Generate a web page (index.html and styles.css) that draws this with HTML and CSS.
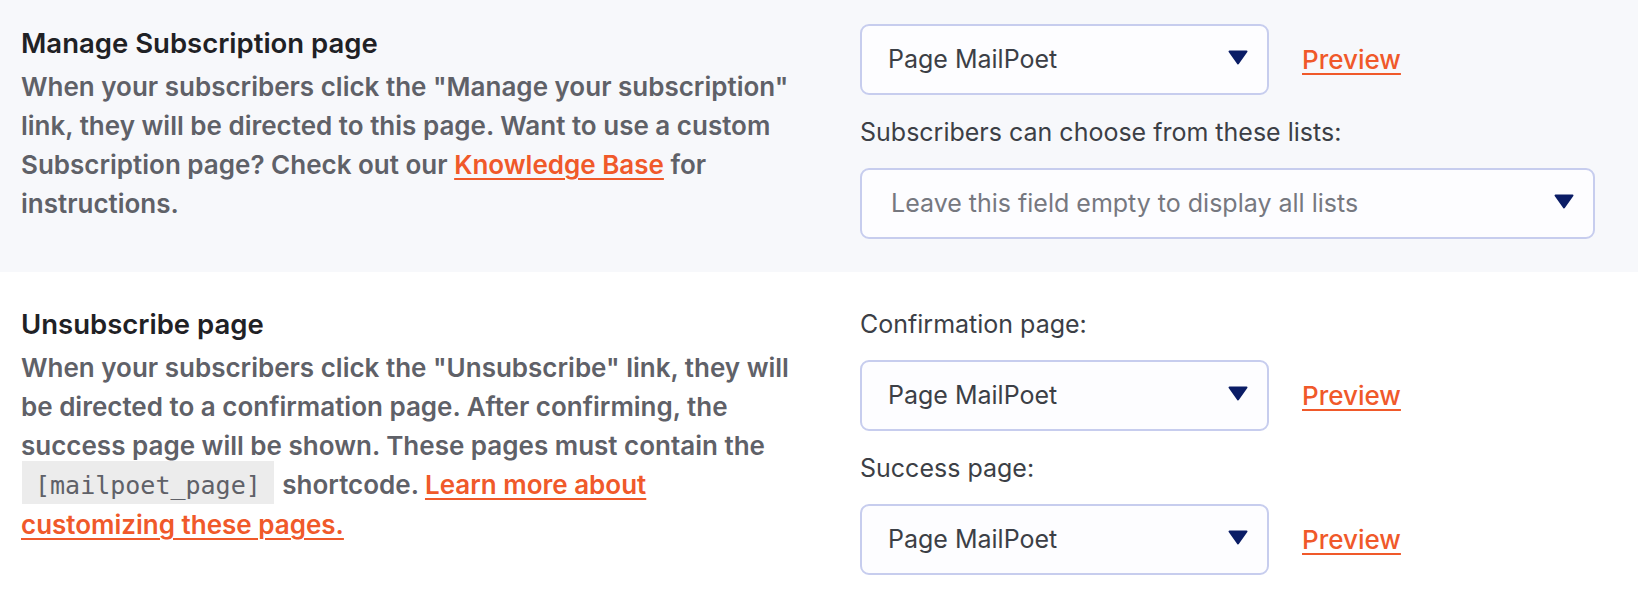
FILE: index.html
```html
<!DOCTYPE html>
<html>
    <head>
        <meta charset="utf-8">
        <title>MailPoet settings - pages</title>
        <link rel="stylesheet" href="styles.css">
    </head>
    <body>
        <div class="row row-alt">
            <div class="info">
                <h3>Manage Subscription page</h3>
                <p>When your subscribers click the "Manage your subscription" link, they will be directed to this page. Want to use a custom Subscription page? Check out our <a href="#">Knowledge Base</a> for instructions.</p>
            </div>
            <div class="fields">
                <div class="pick">
                    <div class="select">
                        <span>Page MailPoet</span>
                        <svg class="caret" width="20" height="15" viewBox="0 0 20 15"><path d="M1.5 1.5 H18.5 L10 13.5 Z" fill="#0b1d66" stroke="#0b1d66" stroke-width="2" stroke-linejoin="round"/></svg>
                    </div>
                    <a href="#" class="preview">Preview</a>
                </div>
                <label>Subscribers can choose from these lists:</label>
                <div class="select select-wide">
                    <span class="placeholder">Leave this field empty to display all lists</span>
                    <svg class="caret" width="20" height="15" viewBox="0 0 20 15"><path d="M1.5 1.5 H18.5 L10 13.5 Z" fill="#0b1d66" stroke="#0b1d66" stroke-width="2" stroke-linejoin="round"/></svg>
                </div>
            </div>
        </div>
        <div class="row">
            <div class="info">
                <h3>Unsubscribe page</h3>
                <p>When your subscribers click the "Unsubscribe" link, they will be directed to a confirmation page. After confirming, the success page will be shown. These pages must contain the <code>[mailpoet_page]</code> shortcode. <a href="#">Learn more about customizing these pages.</a></p>
            </div>
            <div class="fields">
                <label class="first">Confirmation page:</label>
                <div class="pick">
                    <div class="select">
                        <span>Page MailPoet</span>
                        <svg class="caret" width="20" height="15" viewBox="0 0 20 15"><path d="M1.5 1.5 H18.5 L10 13.5 Z" fill="#0b1d66" stroke="#0b1d66" stroke-width="2" stroke-linejoin="round"/></svg>
                    </div>
                    <a href="#" class="preview">Preview</a>
                </div>
                <label>Success page:</label>
                <div class="pick">
                    <div class="select">
                        <span>Page MailPoet</span>
                        <svg class="caret" width="20" height="15" viewBox="0 0 20 15"><path d="M1.5 1.5 H18.5 L10 13.5 Z" fill="#0b1d66" stroke="#0b1d66" stroke-width="2" stroke-linejoin="round"/></svg>
                    </div>
                    <a href="#" class="preview">Preview</a>
                </div>
            </div>
        </div>
    </body>
</html>
```

FILE: styles.css
```css
body{margin:0; font-family:Inter, "Noto Sans", sans-serif; font-size:25px; line-height:39px; color:#3c3f46; background-color:#fff}
a{color:#f0592a; text-decoration:underline; text-decoration-thickness:2px; text-underline-offset:4px}
.row{display:grid; grid-template-columns:785px 1fr; column-gap:54px; padding:33px 21px 31px}
.row-alt{background-color:#f7f8fb; padding-top:24px; padding-bottom:33px}
.info h3{margin:0 0 4px; font-size:27.5px; font-weight:600; color:#1f2125}
.info p{margin:0; font-size:26px; font-weight:600; color:#5f6168}
code{font-family:"DejaVu Sans Mono", "Liberation Mono", monospace; font-size:25px; font-weight:400; background-color:#ececec; color:#5f6168; padding:10px 13px 4px; margin:0 2px 0 1px}
.fields label{display:block; margin:18px 0 16px; color:#3c3f46}
.fields label.first{margin-top:0}
.pick{display:flex; align-items:center; gap:33px}
.select{box-sizing:border-box; width:409px; height:71px; display:flex; align-items:center; justify-content:space-between; padding:0 19px 0 26px; background-color:#fdfdff; border:2px solid #c7cdee; border-radius:9px; color:#3c3f46}
.select-wide{width:735px; padding-left:29px}
.placeholder{color:#76787f}
.caret{display:block; margin-top:-5px}
.preview{font-size:26px; font-weight:500}
```
